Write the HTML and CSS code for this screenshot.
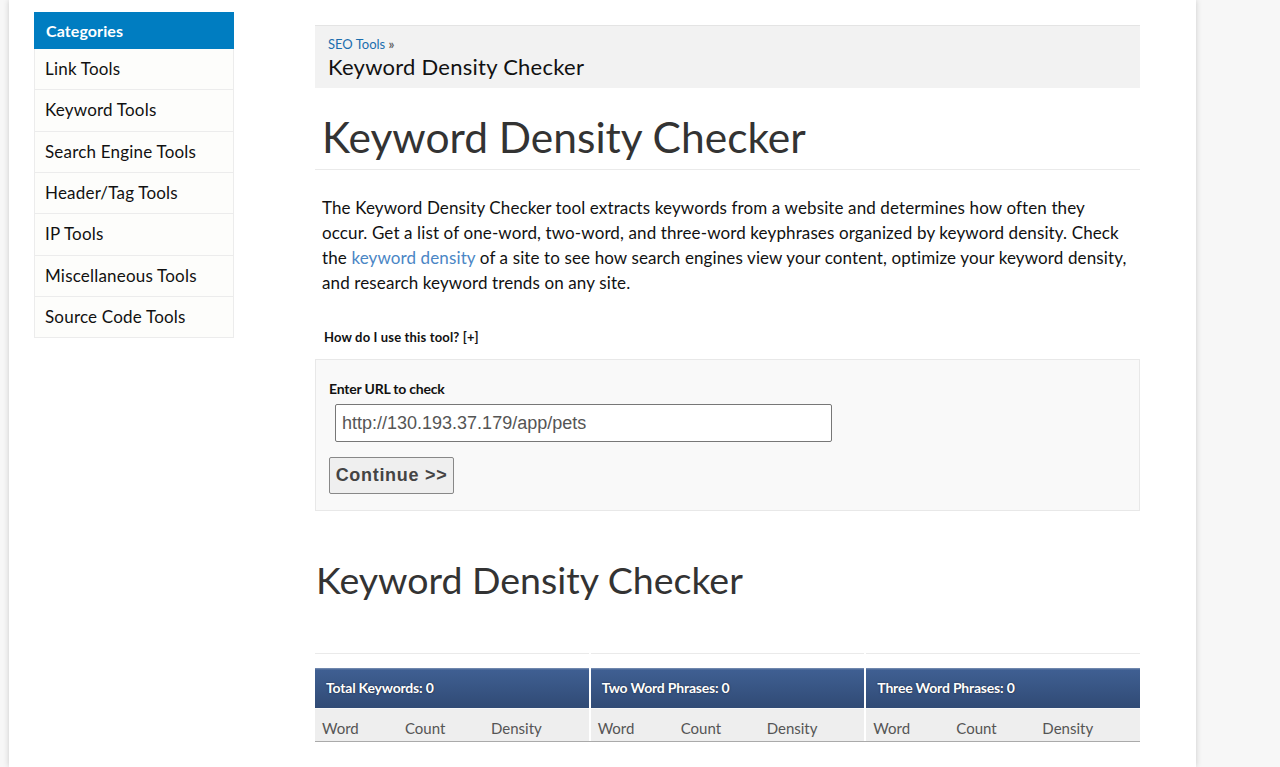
FILE: index.html
```html
<!DOCTYPE html>
<html>
<head>
<meta charset="utf-8">
<link rel="stylesheet" href="styles.css">
</head>
<body>
<div class="page">
  <aside class="sidebar">
    <div class="cat-head">Categories</div>
    <ul class="cat-list">
      <li>Link Tools</li>
      <li>Keyword Tools</li>
      <li>Search Engine Tools</li>
      <li>Header/Tag Tools</li>
      <li>IP Tools</li>
      <li>Miscellaneous Tools</li>
      <li>Source Code Tools</li>
    </ul>
  </aside>
  <main class="main">
    <div class="crumbs">
      <div class="crumb-links"><a href="#">SEO Tools</a> <b>»</b></div>
      <div class="crumb-title">Keyword Density Checker</div>
    </div>
    <h1 class="title">Keyword Density Checker</h1>
    <p class="intro">The Keyword Density Checker tool extracts keywords from a website and determines how often they occur. Get a list of one-word, two-word, and three-word keyphrases organized by keyword density. Check the <a href="#">keyword density</a> of a site to see how search engines view your content, optimize your keyword density, and research keyword trends on any site.</p>
    <div class="howto">How do I use this tool? [+]</div>
    <form class="tool-form">
      <label class="field-label">Enter URL to check</label>
      <input class="url-input" type="text" value="http://130.193.37.179/app/pets">
      <button class="submit" type="button">Continue &gt;&gt;</button>
    </form>
    <h2 class="results-title">Keyword Density Checker</h2>
    <div class="results">
      <div class="col">
        <div class="col-head">Total Keywords: 0</div>
        <div class="col-sub"><span class="c-word">Word</span><span class="c-count">Count</span><span>Density</span></div>
      </div>
      <div class="col">
        <div class="col-head">Two Word Phrases: 0</div>
        <div class="col-sub"><span class="c-word">Word</span><span class="c-count">Count</span><span>Density</span></div>
      </div>
      <div class="col">
        <div class="col-head">Three Word Phrases: 0</div>
        <div class="col-sub"><span class="c-word">Word</span><span class="c-count">Count</span><span>Density</span></div>
      </div>
    </div>
  </main>
</div>
</body>
</html>
```

FILE: styles.css
```css
html, body {
  margin: 0;
  padding: 0;
}
body {
  background: #f7f7f7;
  font-family: Lato, "Open Sans", sans-serif;
  color: #111;
  height: 767px;
  overflow: hidden;
}
.page {
  margin-left: 9px;
  width: 1187px;
  height: 767px;
  background: #fff;
  box-shadow: 0 0 6px rgba(0, 0, 0, 0.18);
  display: flex;
  align-items: flex-start;
}
.sidebar {
  width: 200px;
  margin-left: 25px;
  margin-top: 12px;
}
.cat-head {
  background: #007dc1;
  color: #fff;
  font-weight: 700;
  font-size: 16px;
  height: 37px;
  line-height: 38px;
  padding-left: 12px;
  letter-spacing: 0.1px;
}
.cat-list {
  list-style: none;
  margin: 0;
  padding: 0;
  border-left: 1px solid #ececec;
  border-right: 1px solid #ececec;
  background: #fdfdfb;
}
.cat-list li {
  height: 40.33px;
  line-height: 40px;
  border-bottom: 1px solid #ececec;
  padding-left: 10px;
  font-size: 17px;
  letter-spacing: 0.2px;
  color: #111;
}
.main {
  width: 825px;
  margin-left: 81px;
  margin-top: 25px;
}
.crumbs {
  background: #f2f2f2;
  border-top: 1px solid #e4e4e4;
  padding: 9px 13px 0;
  box-sizing: border-box;
  height: 63px;
}
.crumb-links {
  font-size: 13px;
  line-height: 18px;
  color: #555;
}
.crumb-links a {
  color: #1b6eae;
  text-decoration: none;
}
.crumb-links b {
  font-weight: 700;
  color: #666;
}
.crumb-title {
  font-size: 22px;
  line-height: 28px;
  color: #111;
  letter-spacing: 0.25px;
}
.title {
  font-size: 42.5px;
  font-weight: 400;
  color: #333;
  margin: 0;
  padding: 23px 7px 0;
  line-height: 52px;
  height: 82px;
  box-sizing: border-box;
  border-bottom: 1px solid #eaeaea;
}
.intro {
  font-size: 17px;
  line-height: 25px;
  margin: 25px 0 0;
  padding: 0 7px;
  color: #111;
  letter-spacing: 0.12px;
}
.intro a {
  color: #4a86c5;
  text-decoration: none;
}
.howto {
  font-size: 13px;
  font-weight: 700;
  margin-top: 34px;
  padding-left: 9px;
  line-height: 16px;
  color: #111;
  letter-spacing: 0.15px;
}
.tool-form {
  margin-top: 14px;
  background: #f9f9f9;
  border: 1px solid #e8e8e8;
  height: 152px;
  box-sizing: border-box;
  padding: 21px 13px 0;
  display: flex;
  flex-direction: column;
  align-items: flex-start;
}
.field-label {
  font-size: 14px;
  font-weight: 700;
  line-height: 16px;
  color: #111;
  letter-spacing: -0.2px;
}
.url-input {
  margin: 7px 0 0 6px;
  width: 497px;
  height: 38px;
  box-sizing: border-box;
  border: 1px solid #777;
  border-radius: 2px;
  background: #fff;
  font-family: "Liberation Sans", Arial, sans-serif;
  font-size: 18px;
  color: #555;
  padding: 0 6px;
  outline: none;
}
.submit {
  margin-top: 15px;
  width: 125px;
  height: 37px;
  box-sizing: border-box;
  border: 1px solid #888;
  border-radius: 2px;
  background: #efefef;
  font-family: "Liberation Sans", Arial, sans-serif;
  font-weight: 700;
  font-size: 18px;
  letter-spacing: 0.7px;
  color: #444;
  padding: 0;
}
.results-title {
  font-size: 37.5px;
  font-weight: 400;
  color: #333;
  margin: 46px 0 0 1px;
  line-height: 46px;
}
.results {
  margin-top: 50px;
  display: flex;
  gap: 2px;
  border-bottom: 1px solid #aaa;
}
.col {
  flex: 1;
  background: #eee;
}
.col-head {
  border-top: 1px solid #eaeaea;
  background: linear-gradient(#fff 0, #fff 14px, #7f94b5 14px, #3f5f92 16px, #304a74 55px);
  height: 55px;
  box-sizing: border-box;
  padding: 14px 0 0 11px;
  line-height: 40px;
  color: #fff;
  font-weight: 700;
  font-size: 14px;
  letter-spacing: -0.2px;
  text-shadow: 0 0 2px rgba(0, 0, 0, 0.6);
}
.col-sub {
  height: 32px;
  line-height: 39px;
  padding-left: 7px;
  font-size: 15px;
  color: #555;
  display: flex;
  border-top: 1px solid #f6f6f6;
}
.c-word {
  width: 83px;
}
.c-count {
  width: 86px;
}
```
